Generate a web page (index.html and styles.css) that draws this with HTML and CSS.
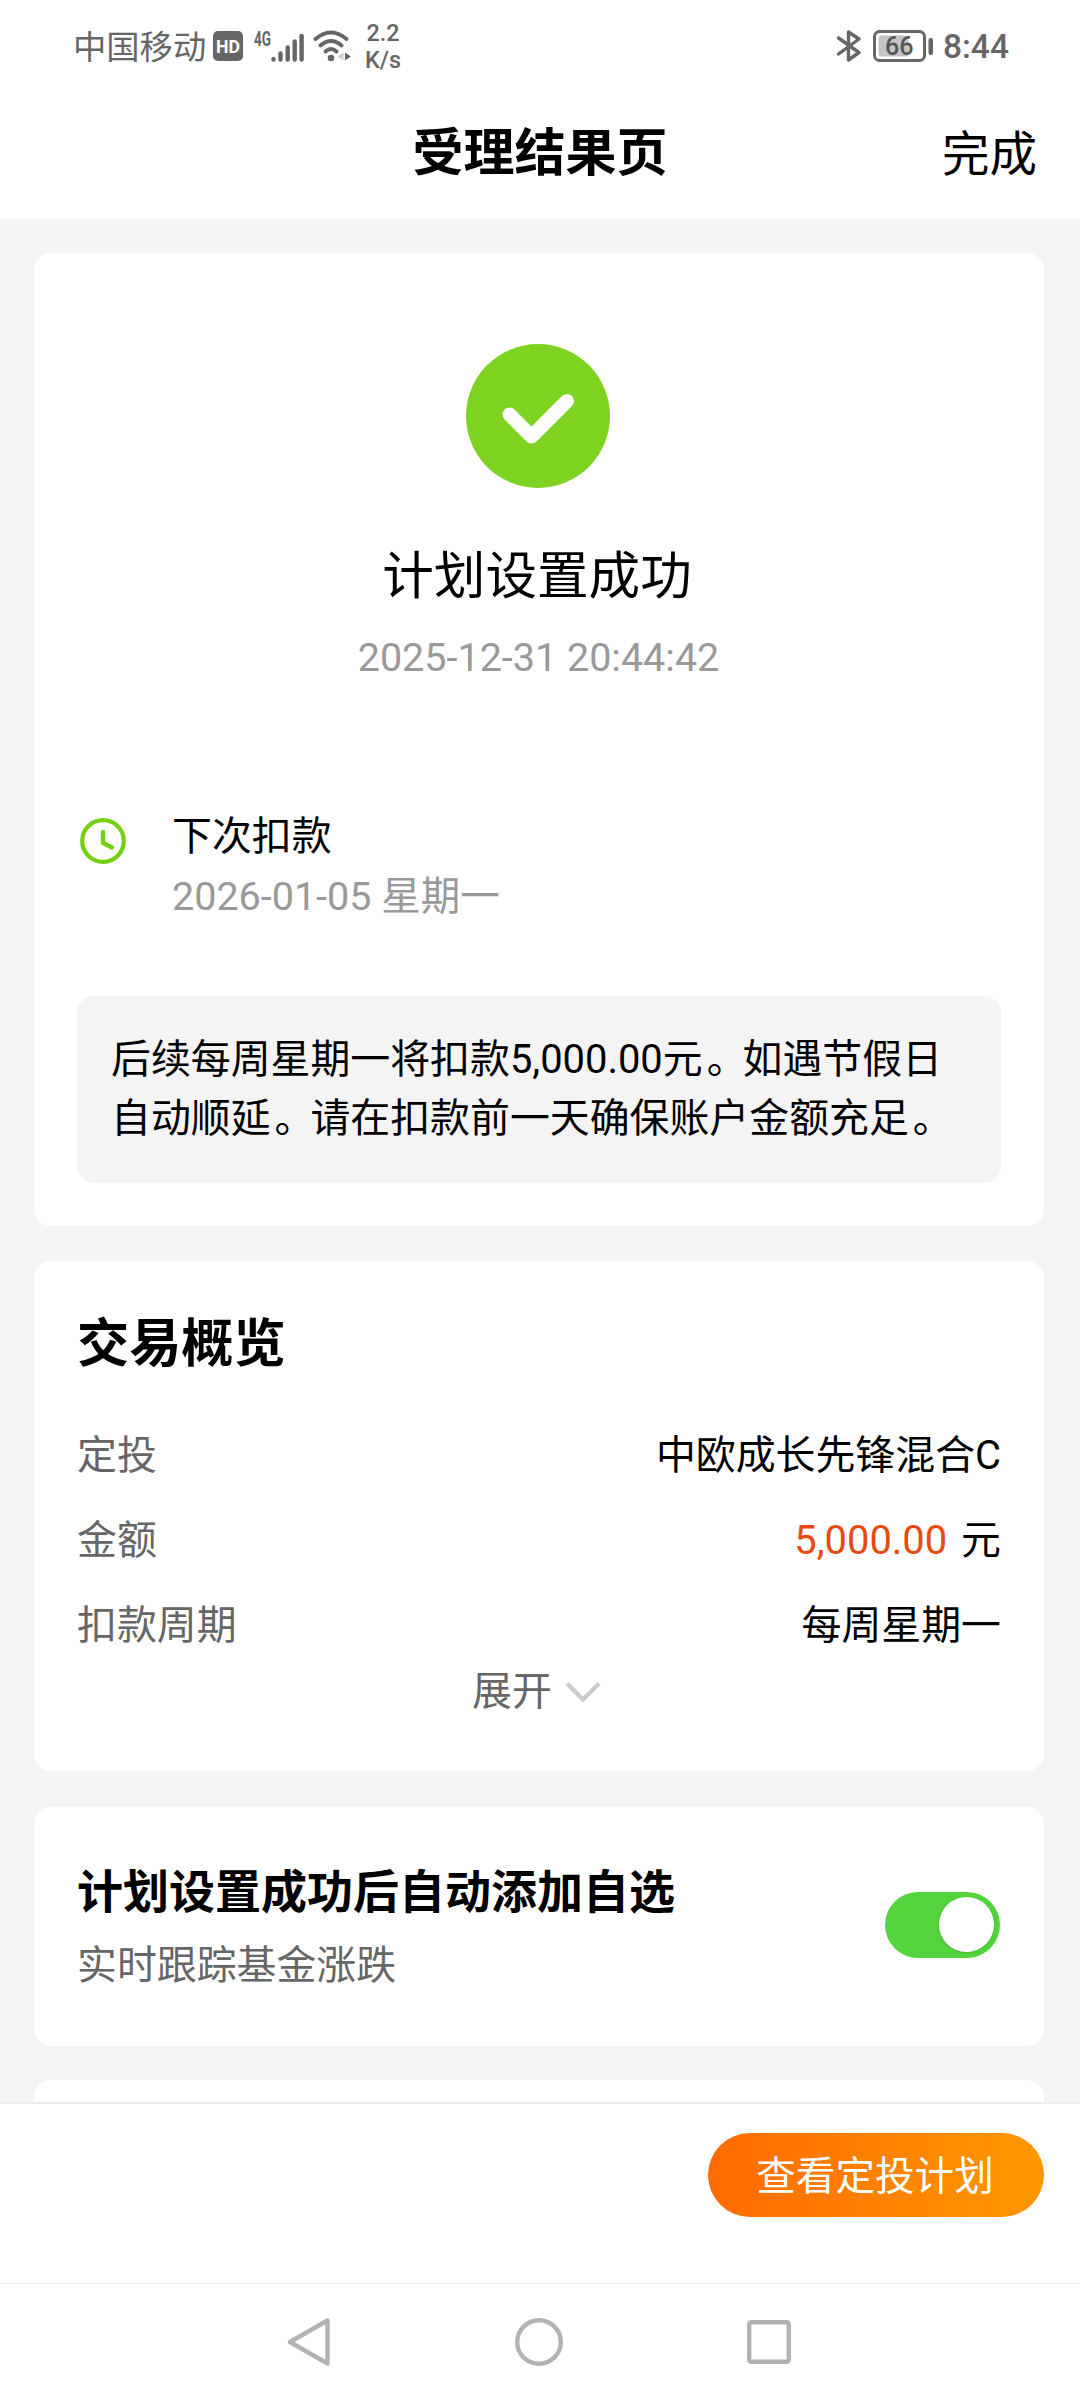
FILE: index.html
```html
<!DOCTYPE html>
<html lang="zh-CN">
<head>
    <meta charset="UTF-8">
    <meta name="viewport" content="width=device-width, initial-scale=1.0">
    <title>受理结果页</title>
    <link rel="stylesheet" href="styles.css">
</head>
<body>
    <div class="status-bar">
        <div class="status-left">
            <span class="carrier">中国移动</span>
            <svg class="hd" width="30" height="30" viewBox="0 0 30 30">
                <rect width="30" height="30" rx="5" fill="#666"/>
                <text x="15" y="21.5" text-anchor="middle" textLength="24" lengthAdjust="spacingAndGlyphs">HD</text>
            </svg>
            <svg class="signal" width="52" height="34" viewBox="-1 -2 52 34">
                <text x="0" y="14.500" textLength="17" lengthAdjust="spacingAndGlyphs">4G</text>
                <path d="M19.500 28v.5M26.500 22.500v6M33.700 16.500v12M40.700 10.500v18M47.600 5v23.500" stroke="#666" stroke-width="4.400" stroke-linecap="round" fill="none"/>
            </svg>
            <svg class="wifi" width="38" height="32" viewBox="0 0 38 32">
                <g fill="none" stroke="#666" stroke-width="4" stroke-linecap="round">
                    <path d="M2.500 9Q18 -4 33.500 9"/>
                    <path d="M7.500 15.500Q18 6.500 28.500 15.500"/>
                    <path d="M12.500 21.500Q18 16.500 23.500 21.500"/>
                </g>
                <circle cx="18" cy="28" r="3.300" fill="#666"/>
                <path d="M30.500 22.500v8l-6-4z" fill="#ccc"/>
                <path d="M32 22.500v8l6-4z" fill="#666"/>
            </svg>
            <div class="net-speed">
                <span>2.2</span>
                <span>K/s</span>
            </div>
        </div>
        <div class="status-right">
            <svg width="26" height="34" viewBox="0 0 26 34" fill="none" stroke="#666" stroke-width="3.400" stroke-linecap="round" stroke-linejoin="round">
                <path d="M2.500 9L23 23.500L12.500 31V3L23 10L2.500 25"/>
            </svg>
            <svg class="battery" width="62" height="34" viewBox="0 0 62 34">
                <rect x="1.500" y="2.500" width="50" height="29" rx="5" fill="none" stroke="#666" stroke-width="3"/>
                <rect x="5.500" y="6.500" width="30" height="21" rx="3" fill="#c4c4c4"/>
                <rect x="55.500" y="9" width="4.500" height="17" rx="2" fill="#666"/>
                <text x="26.300" y="26" text-anchor="middle">66</text>
            </svg>
            <span class="clock">8:44</span>
        </div>
    </div>

    <header class="header">
        <h1>受理结果页</h1>
        <a class="done">完成</a>
    </header>

    <main class="content">
        <section class="card result">
            <svg class="check" width="144" height="144" viewBox="0 0 144 144">
                <circle cx="72" cy="72" r="72" fill="#7ed321"/>
                <path d="M43.500 70.500L65.500 92.500L101 57" fill="none" stroke="#fff" stroke-width="14" stroke-linecap="round" stroke-linejoin="round"/>
            </svg>
            <h2>计划设置成功</h2>
            <p class="time">2025-12-31 20:44:42</p>
            <div class="next">
                <svg width="46" height="46" viewBox="0 0 46 46" fill="none" stroke="#73d013" stroke-linecap="round" stroke-linejoin="round">
                    <circle cx="23" cy="23" r="20.800" stroke-width="4.200"/>
                    <path d="M23 14v11l9 4.500" stroke-width="4.400"/>
                </svg>
                <div class="next-text">
                    <p>下次扣款</p>
                    <p class="date">2026-01-05 星期一</p>
                </div>
            </div>
            <div class="notice">后续每周星期一将扣款5,000.00元<span class="stop">。</span>如遇节假日<br>自动顺延<span class="stop">。</span>请在扣款前一天确保账户金额充足<span class="stop">。</span></div>
        </section>

        <section class="card overview">
            <h3>交易概览</h3>
            <div class="row"><span class="label">定投</span><span>中欧成长先锋混合C</span></div>
            <div class="row"><span class="label">金额</span><span><em>5,000.00</em> 元</span></div>
            <div class="row"><span class="label">扣款周期</span><span>每周星期一</span></div>
            <div class="expand">
                <span>展开</span>
                <svg width="36" height="22" viewBox="0 0 36 22">
                    <path d="M2 2.500L18 18.500L34 2.500" fill="none" stroke="#ccc" stroke-width="4.400"/>
                </svg>
            </div>
        </section>

        <section class="card favorite">
            <div>
                <h4>计划设置成功后自动添加自选</h4>
                <p>实时跟踪基金涨跌</p>
            </div>
            <div class="toggle"><div class="knob"></div></div>
        </section>

        <section class="card more"></section>
    </main>

    <footer class="footer">
        <button class="btn">查看定投计划</button>
    </footer>

    <nav class="nav-bar">
        <svg width="48" height="48" viewBox="0 0 48 48" fill="none" stroke="#b2b2b2" stroke-width="4.400" stroke-linejoin="round">
            <path d="M5 24L42.500 2.500V45.500Z"/>
        </svg>
        <svg width="48" height="48" viewBox="0 0 48 48" fill="none" stroke="#b2b2b2" stroke-width="4.400">
            <circle cx="24" cy="24" r="21.800"/>
        </svg>
        <svg width="48" height="48" viewBox="0 0 48 48" fill="none" stroke="#b2b2b2" stroke-width="4.400">
            <rect x="4.200" y="4.200" width="39.600" height="39.600" rx="2"/>
        </svg>
    </nav>
</body>
</html>
```
FILE: styles.css
```css
* {
    margin: 0;
    padding: 0;
    box-sizing: border-box;
}

body {
    width: 1080px;
    height: 2400px;
    display: flex;
    flex-direction: column;
    overflow: hidden;
    background: #f4f4f4;
    color: #000;
    font-family: Roboto, "Noto Sans CJK SC", sans-serif;
    font-size: 39.9px;
    line-height: 60px;
}

svg {
    display: block;
    flex-shrink: 0;
}

/* system status bar */
.status-bar {
    height: 92px;
    flex-shrink: 0;
    padding: 0 71px 0 73px;
    background: #fff;
    color: #666;
    display: flex;
    justify-content: space-between;
    align-items: center;
}

.status-left,
.status-right {
    display: flex;
    align-items: center;
}

.carrier {
    font-size: 33.3px;
    margin-top: 3px;
    width: 140px;
}

.hd text {
    font-size: 18px;
    font-weight: 700;
    fill: #fff;
}

.signal {
    margin-left: 10px;
}

.signal text {
    font-size: 19.5px;
    font-weight: 700;
    fill: #666;
}

.wifi {
    margin-left: 8px;
}

.net-speed {
    display: flex;
    flex-direction: column;
    margin: 2px 0 0 14px;
    font-size: 23.4px;
    line-height: 27px;
    font-weight: 500;
    text-align: center;
}

.battery {
    margin: 0 8px 0 11px;
}

.battery text {
    font-size: 25px;
    font-weight: 500;
    fill: #555;
}

.clock {
    font-size: 33.5px;
    font-weight: 500;
    width: 66px;
    margin-top: 2px;
}

/* page header */
.header {
    height: 127px;
    flex-shrink: 0;
    padding: 0 42px;
    background: #fff;
    display: grid;
    grid-template-columns: 1fr auto 1fr;
    align-items: start;
}

.header h1 {
    grid-column: 2;
    font-size: 51px;
    font-weight: 700;
    line-height: 124px;
}

.done {
    justify-self: end;
    font-size: 47.5px;
    line-height: 127px;
    margin-right: 1px;
}

.content {
    flex: 1;
    min-height: 0;
    overflow: hidden;
    padding: 34px 36px 0 34px;
}

.card {
    background: #fff;
    border-radius: 17px;
    padding: 0 43px;
    margin-bottom: 35px;
}

.result {
    height: 973px;
    padding-top: 91px;
}

.check {
    margin: 0 auto;
    position: relative;
    left: -1px;
}

.result h2 {
    margin-top: 50px;
    padding-right: 4px;
    font-size: 51.6px;
    font-weight: 400;
    line-height: 78px;
    text-align: center;
}

.time {
    margin-top: 10px;
    padding-right: 1px;
    text-align: center;
    color: #999;
    font-size: 39.5px;
    line-height: 64px;
}

.next {
    display: flex;
    margin-top: 117px;
}

.next svg {
    margin: 11px 46px 0 3px;
}

.date {
    color: #999;
    font-size: 39.5px;
}

.notice {
    height: 187px;
    margin-top: 69px;
    padding: 34px 34px 0;
    background: #f4f4f4;
    border-radius: 17px;
    line-height: 59.4px;
    white-space: nowrap;
}

.stop {
    padding-left: 4px;
    margin-right: -4px;
}

.overview {
    height: 510px;
    margin-bottom: 36px;
    padding-top: 44px;
}

.overview h3 {
    font-size: 52.2px;
    font-weight: 700;
    line-height: 80px;
    margin-bottom: 28px;
}

.row {
    height: 85px;
    line-height: 85px;
    display: flex;
    justify-content: space-between;
}

.label {
    color: #666;
}

.row em {
    font-style: normal;
    color: #e64a0f;
    margin-right: 4px;
}

.expand {
    display: flex;
    justify-content: center;
    align-items: center;
    gap: 13px;
    height: 60px;
    margin-top: -6px;
    padding-right: 5px;
    color: #666;
}

.favorite {
    height: 239px;
    display: flex;
    justify-content: space-between;
    align-items: flex-start;
    padding-top: 49px;
}

.favorite h4 {
    font-size: 46px;
    font-weight: 700;
    line-height: 72px;
}

.favorite p {
    margin-top: 8px;
    color: #666;
}

.toggle {
    width: 115px;
    height: 66px;
    margin: 36px 1px 0 0;
    padding: 5px 6px;
    border-radius: 33px;
    background: #54d43c;
    display: flex;
    justify-content: flex-end;
}

.knob {
    width: 55px;
    height: 55px;
    border-radius: 50%;
    background: #fff;
    box-shadow: 0 1px 3px rgba(0, 0, 0, 0.15);
}

.more {
    height: 200px;
    margin-top: -1px;
}

.footer {
    height: 181px;
    flex-shrink: 0;
    padding: 29px 36px 0;
    background: #fff;
    border-top: 2px solid #ececec;
    display: flex;
    justify-content: flex-end;
    align-items: flex-start;
}

.btn {
    width: 336px;
    height: 84px;
    padding: 0 2px 5px 0;
    border: none;
    border-radius: 42px;
    background: linear-gradient(90deg, #ff6a00, #ff9800);
    color: #fff;
    font-family: inherit;
    font-size: 39.6px;
}

/* system navigation */
.nav-bar {
    height: 117px;
    flex-shrink: 0;
    padding: 0 287px 0 285px;
    background: #fff;
    border-top: 1px solid #f0f0f0;
    display: flex;
    justify-content: space-between;
    align-items: center;
}
```
